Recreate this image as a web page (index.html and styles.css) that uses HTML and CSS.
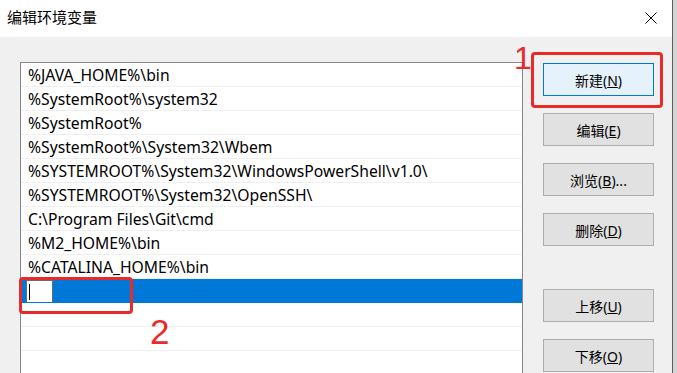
FILE: index.html
```html
<!DOCTYPE html>
<html lang="zh-CN">
<head>
  <meta charset="UTF-8" />
  <title>编辑环境变量</title>
  <link rel="stylesheet" href="styles.css">
</head>
<body>
  <div class="window">
    <div class="titlebar">
      <span class="title">编辑环境变量</span>
      <svg class="close" width="12" height="12" viewBox="0 0 12 12">
        <path d="M0.5 0.5 L11.5 11.5 M11.5 0.5 L0.5 11.5" stroke="#000" stroke-width="1" fill="none"/>
      </svg>
    </div>

    <div class="content">
      <div class="list">
        <div class="row">%JAVA_HOME%\bin</div>
        <div class="row">%SystemRoot%\system32</div>
        <div class="row">%SystemRoot%</div>
        <div class="row">%SystemRoot%\System32\Wbem</div>
        <div class="row">%SYSTEMROOT%\System32\WindowsPowerShell\v1.0\</div>
        <div class="row">%SYSTEMROOT%\System32\OpenSSH\</div>
        <div class="row">C:\Program Files\Git\cmd</div>
        <div class="row">%M2_HOME%\bin</div>
        <div class="row">%CATALINA_HOME%\bin</div>
        <div class="row selected"><span class="editbox"><span class="caret"></span></span></div>
        <div class="row"></div>
        <div class="row"></div>
        <div class="row"></div>
      </div>

      <div class="buttons">
        <button class="btn primary">新建(<u>N</u>)</button>
        <button class="btn">编辑(<u>E</u>)</button>
        <button class="btn">浏览(<u>B</u>)...</button>
        <button class="btn">删除(<u>D</u>)</button>
        <button class="btn spaced">上移(<u>U</u>)</button>
        <button class="btn">下移(<u>O</u>)</button>
      </div>
    </div>

    <!-- annotations -->
    <div class="mark mark-new"></div>
    <span class="num num-1">1</span>
    <div class="mark mark-edit"></div>
    <span class="num num-2">2</span>
  </div>
</body>
</html>
```

FILE: styles.css
```css
body {
  margin: 0;
  background: #d4d4d4;
  font-family: "Noto Sans", "Noto Sans CJK SC", sans-serif;
  color: #000;
}
.window {
  position: relative;
  width: 672px;
  height: 373px;
  border-right: 1px solid #5e5e5e;
  background: #f0f0f0;
  overflow: hidden;
}
.titlebar {
  height: 37px;
  background: #fff;
  display: flex;
  align-items: center;
  justify-content: space-between;
  padding: 0 15px 0 7px;
}
.title {
  font-size: 15px;
  margin-top: -4px;
}
.close {
  margin-top: -2px;
}
.content {
  display: flex;
  padding: 25px 0 0 20px;
}
.list {
  width: 501px;
  height: 320px;
  background: #fff;
  border: 1px solid #828790;
  border-bottom: none;
}
.row {
  height: 23px;
  line-height: 25px;
  border-bottom: 1px solid #f0f0f0;
  padding-left: 7px;
  font-size: 15.7px;
  white-space: nowrap;
  overflow: hidden;
}
.row.selected {
  background: #0078d7;
  border-bottom-color: #0078d7;
  padding-left: 5px;
  display: flex;
  align-items: flex-end;
}
.editbox {
  display: block;
  width: 27px;
  height: 22px;
  background: #fff;
  border: 1px solid #6b6b6b;
  border-bottom: none;
  box-sizing: border-box;
  padding: 3px 0 0 2px;
}
.caret {
  display: block;
  width: 1px;
  height: 16px;
  background: #000;
}
.buttons {
  display: flex;
  flex-direction: column;
  gap: 17px;
  margin: 1px 0 0 20px;
}
.btn {
  width: 111px;
  height: 33px;
  background: #e1e1e1;
  border: 1px solid #adadad;
  font-family: inherit;
  font-size: 14px;
  color: #000;
  padding: 0;
}
.btn.primary {
  background: #e5f1fb;
  border-color: #0078d7;
}
.btn.spaced {
  margin-top: 26px;
}
.mark {
  position: absolute;
  border: 3px solid #ea2a2a;
  border-radius: 4px;
}
.mark-new {
  left: 531px;
  top: 52px;
  width: 126px;
  height: 50px;
}
.mark-edit {
  left: 19px;
  top: 277px;
  width: 108px;
  height: 31px;
}
.num {
  position: absolute;
  color: #ea2a2a;
  font-family: "Liberation Sans", sans-serif;
  line-height: 1;
}
.num-1 {
  left: 514px;
  top: 42px;
  font-size: 32px;
}
.num-2 {
  left: 150px;
  top: 314px;
  font-size: 35px;
}
```
